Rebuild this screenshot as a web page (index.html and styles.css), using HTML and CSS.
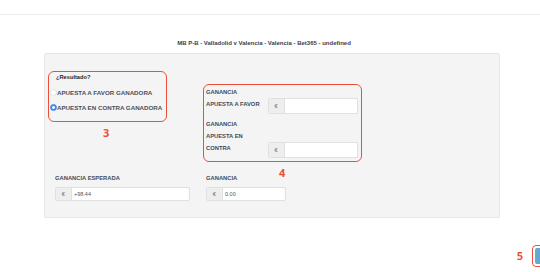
FILE: index.html
```html
<!DOCTYPE html>
<html lang="es">

<head>
    <meta charset="UTF-8">
    <meta name="viewport" content="width=device-width, initial-scale=1.0">
    <title>Resultado</title>
    <link rel="stylesheet" href="styles.css">
</head>

<body>
    <div class="cabecera"></div>

    <h1 class="titulo">MB P-B - Valladolid v Valencia - Valencia - Bet365 - undefined</h1>

    <div class="panel">
        <div class="fila-superior">
            <div class="resultado marcado">
                <div class="resultado-titulo">¿Resultado?</div>
                <label class="opcion"><span class="radio"></span>APUESTA A FAVOR GANADORA</label>
                <label class="opcion"><span class="radio activo"></span>APUESTA EN CONTRA GANADORA</label>
                <span class="numero numero-3">3</span>
            </div>

            <div class="ganancias marcado">
                <div class="ganancia-fila">
                    <div class="ganancia-label">GANANCIA APUESTA A FAVOR</div>
                    <div class="grupo">
                        <span class="addon">€</span>
                        <span class="campo"></span>
                    </div>
                </div>
                <div class="ganancia-fila">
                    <div class="ganancia-label">GANANCIA APUESTA EN CONTRA</div>
                    <div class="grupo">
                        <span class="addon">€</span>
                        <span class="campo"></span>
                    </div>
                </div>
                <span class="numero numero-4">4</span>
            </div>
        </div>

        <div class="fila-inferior">
            <div class="resumen resumen-esperada">
                <div class="resumen-label">GANANCIA ESPERADA</div>
                <div class="grupo">
                    <span class="addon">€</span>
                    <span class="campo">+98.44</span>
                </div>
            </div>
            <div class="resumen resumen-ganancia">
                <div class="resumen-label">GANANCIA</div>
                <div class="grupo">
                    <span class="addon">€</span>
                    <span class="campo">0.00</span>
                </div>
            </div>
        </div>
    </div>

    <div class="subir">
        <span class="numero numero-5">5</span>
        <span class="subir-marco"><span class="subir-boton"></span></span>
    </div>
</body>

</html>
```

FILE: styles.css
```css
* {
    box-sizing: border-box;
    font-family: "Liberation Sans", Arial, sans-serif;
}

body {
    margin: 0;
    background-color: #fff;
    color: #434a58;
}

.cabecera {
    height: 15px;
    border-bottom: 1px solid #ebebeb;
}

.titulo {
    margin: 24px 0 0;
    padding-right: 12px;
    height: 14px;
    line-height: 8px;
    font-size: 6px;
    font-weight: 700;
    text-align: center;
    color: #3a3f4b;
}

/* panel gris */
.panel {
    width: 456px;
    margin-left: 44px;
    background-color: #f4f4f4;
    border: 1px solid #e6e6e6;
    border-radius: 2px;
    padding: 17px 0 16px 3px;
}

.fila-superior {
    display: flex;
    align-items: flex-start;
}

.marcado {
    position: relative;
    border: 1px solid #e8503a;
    border-radius: 6px;
}

.numero {
    position: absolute;
    color: #e8503a;
    font-family: "Open Sans", sans-serif;
    font-size: 11px;
    font-weight: 700;
    line-height: 12px;
}

.resultado {
    width: 119px;
    height: 51px;
    margin-right: 36px;
    padding: 0 0 0 1px;
}

.resultado-titulo {
    height: 10px;
    line-height: 10px;
    padding-left: 6px;
    font-size: 5.7px;
    font-weight: 700;
    color: #23272e;
}

.opcion {
    display: flex;
    align-items: center;
    height: 10px;
    margin-top: 5px;
    font-size: 6.2px;
    font-weight: 700;
    color: #4a5160;
}

.radio {
    width: 7px;
    height: 7px;
    border-radius: 50%;
    border: 1px solid #e2e2e2;
    background-color: #fff;
}

.radio.activo {
    border-color: #3f85f0;
    background: radial-gradient(circle, #fff 0 1.2px, #3f85f0 1.6px);
}

.numero-3 {
    left: 54px;
    top: 55px;
}

.ganancias {
    width: 159px;
    height: 78px;
    margin-top: 13px;
    padding: 1px 3px 0 2px;
}

.numero-4 {
    left: 75px;
    top: 82px;
}

.ganancia-fila {
    display: flex;
    align-items: flex-end;
}

.ganancia-fila + .ganancia-fila {
    margin-top: 4px;
}

.ganancia-label {
    width: 58px;
    margin-right: 4px;
    margin-bottom: 4px;
    font-size: 5.8px;
    line-height: 12px;
    font-weight: 700;
}

.ganancia-fila .grupo {
    width: 91px;
    height: 16px;
}

/* input con addon */
.grupo {
    display: flex;
    border: 1px solid #e0e0e0;
    border-radius: 2px;
    background-color: #fff;
    overflow: hidden;
}

.addon {
    width: 16px;
    display: flex;
    align-items: center;
    justify-content: center;
    background-color: #eeeeee;
    border-right: 1px solid #e0e0e0;
    font-size: 6px;
    color: #777;
}

.campo {
    flex-grow: 1;
    display: flex;
    align-items: center;
    padding-left: 2px;
    font-size: 5.5px;
    color: #555;
}

.fila-inferior {
    display: flex;
    margin-top: 12px;
    padding-left: 7px;
}

.resumen-label {
    height: 8px;
    line-height: 8px;
    font-size: 5.8px;
    font-weight: 700;
}

.resumen .grupo {
    height: 14px;
    margin-top: 5px;
}

.resumen-esperada {
    width: 135px;
    margin-right: 16px;
}

.resumen-ganancia {
    width: 80px;
}

/* boton de subir, abajo a la derecha */
.subir {
    position: fixed;
    right: -6px;
    bottom: 5px;
    display: flex;
    align-items: center;
}

.numero-5 {
    position: static;
    margin-right: 9px;
}

.subir-marco {
    width: 14px;
    height: 22px;
    border: 1px solid #e8503a;
    border-radius: 4px;
    padding: 2px;
}

.subir-boton {
    display: block;
    height: 100%;
    border-radius: 2px;
    background-color: #62a9d4;
}
```
